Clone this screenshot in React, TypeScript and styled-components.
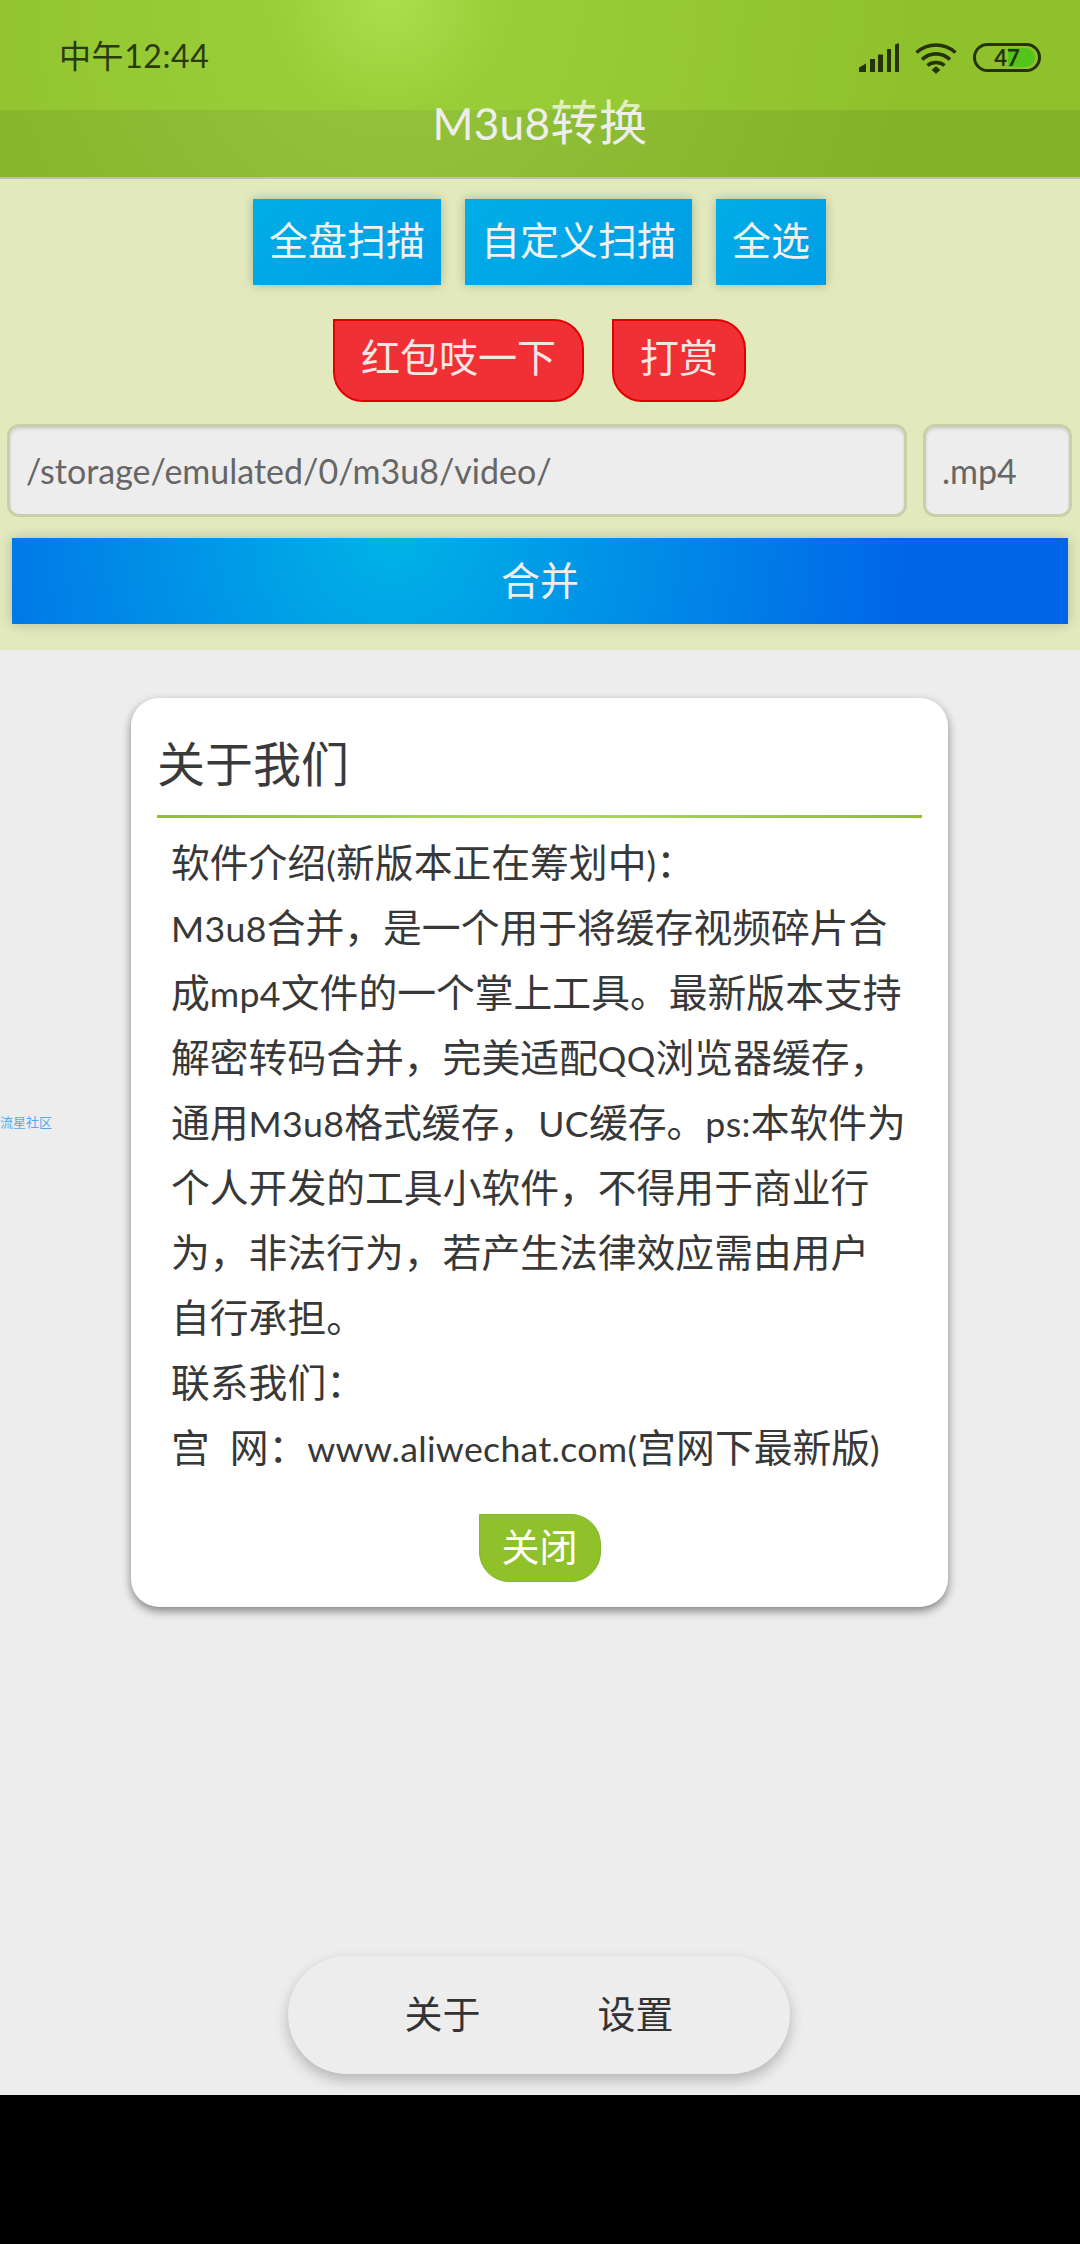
import { createGlobalStyle, styled } from 'styled-components';

const GlobalStyle = createGlobalStyle`
    html, body {
        margin: 0;
        padding: 0;
        background: #000;
    }
    * {
        box-sizing: border-box;
    }
`;

const fontStack = `Lato, "Noto Sans CJK SC", sans-serif`;

const Page = styled.div`
    width: 1080px;
    height: 2244px;
    display: flex;
    flex-direction: column;
    font-family: ${fontStack};
    overflow: hidden;
`;

const Header = styled.header`
    position: relative;
    height: 179px;
    flex: none;
    padding-top: 60px;
    display: flex;
    align-items: center;
    justify-content: center;
    border-bottom: 2px solid #bdbdbd;
    background: radial-gradient(circle at 36% 0, #a8d953 0, #92c23a 112px, #83b128 520px);
`;

const Title = styled.h1`
    margin: 0;
    font-size: 48px;
    font-weight: 400;
    letter-spacing: 0.6px;
    color: #eeeeee;
`;

const StatusBar = styled.div`
    position: absolute;
    top: 0;
    left: 0;
    right: 0;
    height: 110px;
    padding: 36px 39px 0 59px;
    display: flex;
    justify-content: space-between;
    align-items: flex-start;
    background: rgba(179, 245, 56, 0.25);
    color: #2b3a0a;
`;

const Clock = styled.span`
    font-size: 32px;
    line-height: 40px;
    letter-spacing: 0.6px;
`;

const StatusIcons = styled.div`
    display: flex;
    align-items: flex-start;
    gap: 16px;
    padding-top: 7px;
`;

const Battery = styled.div`
    position: relative;
    width: 68px;
    height: 29px;
    border: 3px solid #26330a;
    border-radius: 15px;
    display: flex;
    align-items: center;
    justify-content: center;
    font-size: 22px;
    font-weight: 700;
    color: #26330a;
    span {
        position: relative;
    }
    &::before {
        content: '';
        position: absolute;
        top: 2px;
        bottom: 2px;
        left: 32px;
        right: 3px;
        border-radius: 0 10px 10px 0;
        background: #52c41a;
    }
`;

const Tools = styled.section`
    flex: none;
    height: 471px;
    padding-top: 20px;
    display: flex;
    flex-direction: column;
    background: #e1e9bd;
`;

const ButtonRow = styled.div<{ $gap: number; $mt?: number }>`
    display: flex;
    justify-content: center;
    gap: ${(p) => p.$gap}px;
    margin-top: ${(p) => p.$mt ?? 0}px;
    padding-right: 1px;
`;

const ScanButton = styled.button`
    height: 86px;
    padding: 0 16px 8px;
    border: 0;
    font-family: inherit;
    font-size: 39px;
    color: #f2f2f2;
    background: linear-gradient(135deg, #00aee6, #009de6);
    box-shadow: 0 0 10px rgba(0, 0, 0, 0.22);
`;

const RedButton = styled.button`
    height: 83px;
    padding: 0 26px 12px;
    border: 2px solid #e00000;
    border-radius: 0 30px 30px 30px;
    font-family: inherit;
    font-size: 39px;
    color: #f5e6e6;
    background: #f03035;
`;

const FieldRow = styled.div`
    display: flex;
    gap: 16px;
    margin-top: 22px;
    padding-left: 7px;
`;

const Field = styled.div<{ $width: number }>`
    width: ${(p) => p.$width}px;
    height: 93px;
    padding-left: 16px;
    display: flex;
    align-items: center;
    border: 3px solid #c8d0aa;
    border-radius: 12px;
    font-size: 34px;
    color: #666666;
    background: #ededed;
    box-shadow: inset 0 2px 3px rgba(0, 0, 0, 0.12);
`;

const MergeButton = styled.button`
    height: 86px;
    margin: 21px 12px 0;
    padding: 0 0 6px;
    border: 0;
    font-family: inherit;
    font-size: 39px;
    color: #eeeeee;
    background: radial-gradient(circle at 36% 0, #00b3e6 0, #0065e8 520px);
    box-shadow: 0 0 12px rgba(0, 0, 0, 0.2);
`;

const Main = styled.main`
    position: relative;
    flex: 1;
    padding: 48px 0 21px;
    display: flex;
    flex-direction: column;
    align-items: center;
    background: #ededed;
`;

const CommunityLink = styled.a`
    position: absolute;
    top: 463px;
    left: 0;
    font-size: 13px;
    line-height: 18px;
    color: #4fabf2;
`;

const Card = styled.div`
    position: relative;
    width: 817px;
    height: 909px;
    margin-right: 1px;
    padding: 0 26px;
    display: flex;
    flex-direction: column;
    border-radius: 28px;
    background: #ffffff;
    box-shadow: 0 4px 10px rgba(0, 0, 0, 0.45);
`;

const CardTitle = styled.h2`
    height: 117px;
    margin: 0;
    padding-top: 8px;
    display: flex;
    align-items: center;
    font-size: 48px;
    font-weight: 400;
    color: #3a3a3a;
`;

const Divider = styled.div`
    height: 3px;
    flex: none;
    background: linear-gradient(90deg, #8fc12b, #abe04c 50%, #8fc12b);
`;

const CardBody = styled.div`
    height: 664px;
    margin-top: 12px;
    padding-left: 14px;
    overflow: hidden;
    font-size: 38.8px;
    line-height: 65px;
    color: #383838;
`;

const Line = styled.div`
    height: 65px;
    white-space: pre;
`;

// Latin runs sit a little smaller than the Chinese around them
const Latin = styled.span`
    font-size: 0.92em;
    letter-spacing: 0.3px;
`;

const EmptyHint = styled.div`
    position: absolute;
    top: 753px;
    left: 0;
    right: 0;
    text-align: center;
    font-size: 37px;
    line-height: 50px;
    color: rgba(0, 0, 0, 0.025);
`;

const CloseButton = styled.button`
    align-self: center;
    width: 122px;
    height: 68px;
    margin-top: 20px;
    padding: 0 0 8px;
    border: 1px solid #85b52a;
    border-radius: 0 30px 30px 30px;
    font-family: inherit;
    font-size: 38px;
    color: #ffffff;
    background: #8fc12b;
`;

const TabPill = styled.nav`
    margin-top: auto;
    margin-right: 2px;
    width: 502px;
    height: 118px;
    padding-bottom: 8px;
    display: flex;
    align-items: center;
    justify-content: center;
    border-radius: 59px;
    background: #ededed;
    box-shadow: 0 6px 14px rgba(0, 0, 0, 0.24);
`;

const Tab = styled.span`
    width: 193px;
    text-align: center;
    font-size: 38px;
    color: #333333;
`;

const NavBar = styled.div`
    height: 149px;
    flex: none;
    background: #000000;
`;

const SignalIcon = () => (
    <svg width="40" height="29" viewBox="0 0 40 29" fill="#26330a">
        <path d="M0 24.5 7 20.5V29H0Z" />
        <rect x="11" y="16" width="5" height="13" />
        <rect x="19" y="11.5" width="5" height="17.5" />
        <rect x="28" y="6" width="4" height="23" />
        <path d="M36 1.5 40 0V29H36Z" />
    </svg>
);

const WifiIcon = () => (
    <svg width="42" height="31" viewBox="0 0 42 31" fill="none" stroke="#26330a" strokeWidth="3.6">
        <path d="M1.5 9.5C13 -0.5 29 -0.5 40.5 9.5" />
        <path d="M7 16.5C15 9 27 9 35 16.5" />
        <path d="M12.5 22.5C17 18.5 25 18.5 29.5 22.5" />
        <path d="M21 23.2 25.4 27 21 30.8 16.6 27Z" fill="#26330a" stroke="none" />
    </svg>
);

const aboutLines = [
    '软件介绍(新版本正在筹划中)：',
    'M3u8合并，是一个用于将缓存视频碎片合',
    '成mp4文件的一个掌上工具。最新版本支持',
    '解密转码合并，完美适配QQ浏览器缓存，',
    '通用M3u8格式缓存，UC缓存。ps:本软件为',
    '个人开发的工具小软件，不得用于商业行',
    '为，非法行为，若产生法律效应需由用户',
    '自行承担。',
    '联系我们：',
    '宫  网：www.aliwechat.com(宫网下最新版)',
];

// wraps the ascii runs of a string in <Latin>
const mixed = (text: string) =>
    text.split(/([\x21-\x7e]+)/).map((part, i) => (i % 2 ? <Latin key={i}>{part}</Latin> : part));

const App = () => {
    return (
        <Page>
            <GlobalStyle />
            <Header>
                <StatusBar>
                    <Clock>中午12:44</Clock>
                    <StatusIcons>
                        <SignalIcon />
                        <WifiIcon />
                        <Battery>
                            <span>47</span>
                        </Battery>
                    </StatusIcons>
                </StatusBar>
                <Title>{mixed('M3u8转换')}</Title>
            </Header>
            <Tools>
                <ButtonRow $gap={24}>
                    <ScanButton>全盘扫描</ScanButton>
                    <ScanButton>自定义扫描</ScanButton>
                    <ScanButton>全选</ScanButton>
                </ButtonRow>
                <ButtonRow $gap={28} $mt={34}>
                    <RedButton>红包吱一下</RedButton>
                    <RedButton>打赏</RedButton>
                </ButtonRow>
                <FieldRow>
                    <Field $width={900}>/storage/emulated/0/m3u8/video/</Field>
                    <Field $width={149}>.mp4</Field>
                </FieldRow>
                <MergeButton>合并</MergeButton>
            </Tools>
            <Main>
                <CommunityLink>流星社区</CommunityLink>
                <Card>
                    <CardTitle>关于我们</CardTitle>
                    <Divider />
                    <CardBody>
                        {aboutLines.map((line) => (
                            <Line key={line}>{mixed(line)}</Line>
                        ))}
                    </CardBody>
                    <EmptyHint>当前无文件</EmptyHint>
                    <CloseButton>关闭</CloseButton>
                </Card>
                <TabPill>
                    <Tab>关于</Tab>
                    <Tab>设置</Tab>
                </TabPill>
            </Main>
            <NavBar />
        </Page>
    );
};

export default App;
